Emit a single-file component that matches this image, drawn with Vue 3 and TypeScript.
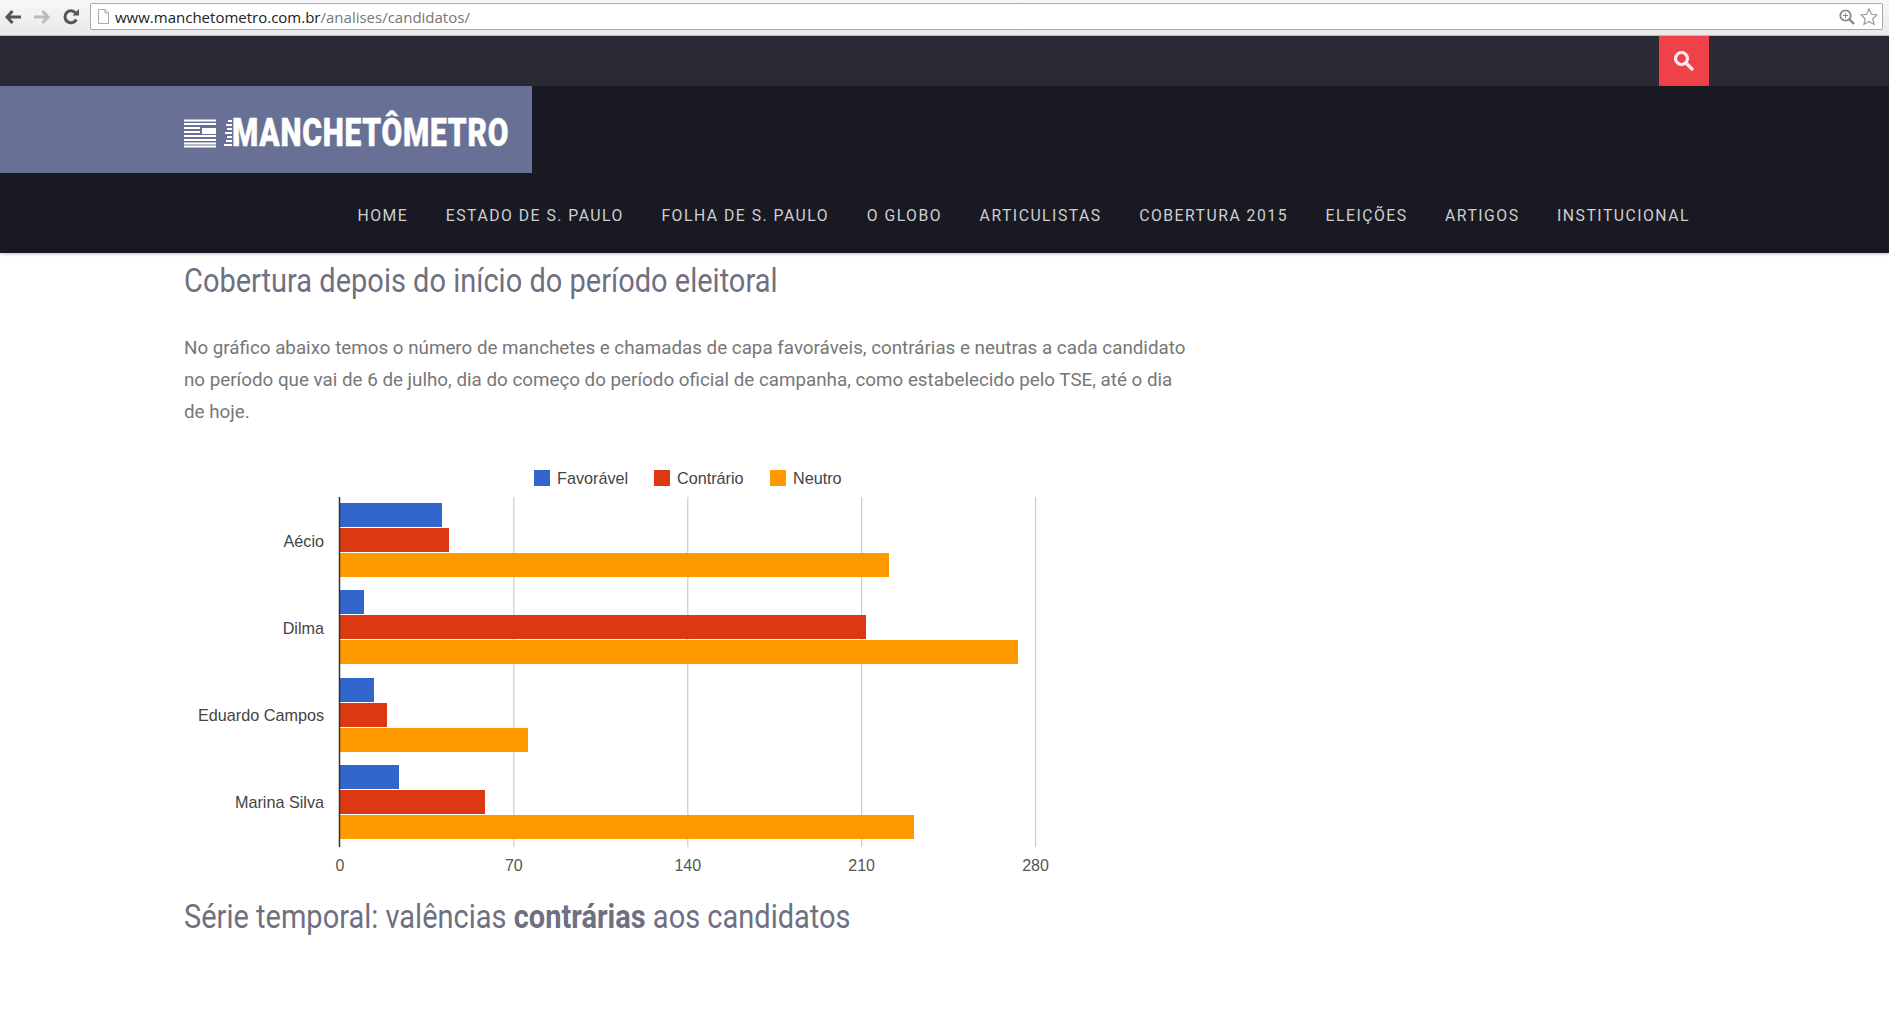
<template>
  <div class="page">
    <div class="browser">
      <svg class="nav-ico" width="16" height="14" viewBox="0 0 16 14"><path d="M7.500 1 2 7l5.500 6M2.500 7H16" fill="none" stroke="#555" stroke-width="3"/></svg>
      <svg class="nav-ico" width="16" height="14" viewBox="0 0 16 14"><path d="M8.500 1 14 7l-5.500 6M13.500 7H0" fill="none" stroke="#bbb" stroke-width="3"/></svg>
      <svg class="nav-ico" width="16" height="16" viewBox="0 0 16 16"><path d="M13.300 10.500A6 6 0 1 1 12.600 4" fill="none" stroke="#555" stroke-width="3"/><path d="M9.500 6.500H16V0z" fill="#555"/></svg>
      <div class="omnibox">
        <svg width="11" height="15" viewBox="0 0 11 15"><path d="M.5.500h6.500l3.500 3.500v10.500H.5zM7 .5V4h3.500" fill="#fff" stroke="#aaa"/></svg>
        <span class="url">www.manchetometro.com.br<span class="url-path">/analises/candidatos/</span></span>
        <span class="spacer"></span>
        <svg width="16" height="16" viewBox="0 0 16 16"><circle cx="6.500" cy="6.500" r="5.200" fill="none" stroke="#888" stroke-width="1.800"/><path d="M10.500 10.500 15 15" stroke="#888" stroke-width="2.400"/><path d="M4 6.500h5M6.500 4v5" stroke="#888"/></svg>
        <svg width="18" height="18" viewBox="0 0 18 18"><path d="m9 1 2.400 5.300 5.600.6-4.200 3.800 1.200 5.700L9 13.500l-5 2.900 1.200-5.700L1 6.900l5.600-.6z" fill="#fff" stroke="#999" stroke-width="1.200"/></svg>
      </div>
    </div>

    <div class="topbar">
      <button class="search" type="button">
        <svg class="search-ico" width="21" height="21" viewBox="0 0 21 21"><circle cx="8.500" cy="8.500" r="6" fill="none" stroke="#fbeeee" stroke-width="3.200"/><path d="m13 13 6 6" stroke="#fbeeee" stroke-width="3.400" stroke-linecap="round"/></svg>
      </button>
    </div>

    <header class="masthead">
      <div class="logo">
        <svg class="logo-mark" width="32" height="29" viewBox="0 0 32 29">
          <path d="M0 1.500h32M0 5h32M0 9h16M0 13h16M0 17h32M0 21h32M0 24.500h32M0 27.500h32" stroke="#fff" stroke-width="2"/>
          <rect x="18" y="9" width="14" height="6" fill="#fff"/>
        </svg>
        <svg class="logo-teeth" width="8" height="29" viewBox="0 0 8 29">
          <path d="M4 2h4M2 6h6M3 10h5M1 14h7M3 18h5M2 22h6M0 26h8" stroke="#fff" stroke-width="2.200"/>
        </svg>
        <span class="logo-text">MANCHETÔMETRO</span>
      </div>
      <nav class="menu">
        <a v-for="item in menu" :key="item">{{ item }}</a>
      </nav>
    </header>

    <main class="content">
      <h2 class="title">Cobertura depois do início do período eleitoral</h2>
      <p class="intro">
        No gráfico abaixo temos o número de manchetes e chamadas de capa favoráveis, contrárias e neutras a cada candidato
        no período que vai de 6 de julho, dia do começo do período oficial de campanha, como estabelecido pelo TSE, até o dia
        de hoje.
      </p>

      <svg class="chart" width="900" height="405" viewBox="0 0 900 405">
        <g v-for="s in series" :key="s.name">
          <rect :x="s.box" y="7" width="16" height="16" :fill="s.color" />
          <text :x="s.box + 23" y="20.500" class="legend">{{ s.name }}</text>
        </g>

        <line v-for="t in ticks.slice(1)" :key="t" :x1="xOf(t)" :x2="xOf(t)" y1="34" y2="384" stroke="#ccc" stroke-width="1.200" />

        <g v-for="(row, i) in rows" :key="row.name">
          <text x="140" :y="84 + i * 87" text-anchor="end" class="label">{{ row.name }}</text>
          <rect
            v-for="(w, j) in row.bars"
            :key="j"
            x="156"
            :y="rowTop(i) + j * 25"
            :width="w"
            height="24"
            :fill="series[j].color"
          />
        </g>

        <line x1="155.500" x2="155.500" y1="34" y2="384" stroke="#333" stroke-width="1.500" />

        <text v-for="t in ticks" :key="t" :x="xOf(t)" y="408" text-anchor="middle" class="tick">{{ t }}</text>
      </svg>

      <h2 class="title second">Série temporal: valências <strong>contrárias</strong> aos candidatos</h2>
    </main>
  </div>
</template>

<script setup lang="ts">
interface Row { name: string; bars: number[]; }

const menu = ['HOME', 'ESTADO DE S. PAULO', 'FOLHA DE S. PAULO', 'O GLOBO', 'ARTICULISTAS', 'COBERTURA 2015', 'ELEIÇÕES', 'ARTIGOS', 'INSTITUCIONAL'];

const series = [
  { name: 'Favorável', color: '#3366cc', box: 350 },
  { name: 'Contrário', color: '#dc3912', box: 470 },
  { name: 'Neutro', color: '#ff9900', box: 586 },
];

// bar lengths in px, read off the chart
const rows: Row[] = [
  { name: 'Aécio', bars: [102, 109, 549] },
  { name: 'Dilma', bars: [24, 526, 678] },
  { name: 'Eduardo Campos', bars: [34, 47, 188] },
  { name: 'Marina Silva', bars: [59, 145, 574] },
];

const ticks = [0, 70, 140, 210, 280];

const xOf = (v: number) => 156 + v * 2.484;
const rowTop = (i: number) => Math.round(40 + i * 87.3);
</script>

<style>
html, body { margin: 0; background: #fff; }
</style>

<style scoped>
.page { font-family: Roboto, "Open Sans", sans-serif; overflow: hidden; }

.browser { height: 36px; box-sizing: border-box; display: flex; align-items: center; padding: 0 6px 2px 5px; gap: 13px; background: linear-gradient(#f7f7f7, #e9e9e9); border-bottom: 1px solid #bbb; }
.nav-ico { flex: none; }
.omnibox { flex: 1; height: 27px; margin-left: -2px; box-sizing: border-box; display: flex; align-items: center; gap: 5px; padding: 0 4px 0 7px; background: #fff; border: 1px solid #aaa; border-radius: 2px; }
.url { font-family: "Open Sans", sans-serif; font-size: 15px; color: #222; margin-left: 1px; }
.url-path { color: #777; }
.spacer { flex: 1; }

.topbar { height: 50px; display: flex; justify-content: flex-end; padding-right: 180px; background: #2b2933; }
.search { width: 50px; height: 50px; border: 0; padding: 0 1px 2px 0; box-sizing: border-box; display: flex; align-items: center; justify-content: center; background: #ef4149; }

.masthead { background: #181922; box-shadow: 0 1px 3px rgba(0, 0, 0, .25); position: relative; }
.logo { width: 532px; height: 87px; box-sizing: border-box; padding-left: 184px; display: flex; align-items: center; background: #697096; }
.logo-mark { flex: none; margin-top: 8px; margin-right: 8px; }
.logo-teeth { flex: none; margin-top: 8px; }
.logo-text { font-size: 39px; line-height: 1; font-weight: 900; color: #fff; letter-spacing: 1px; -webkit-text-stroke: .5px #fff; transform: scaleX(.768); transform-origin: left center; margin-top: 8px; white-space: nowrap; }

.menu { height: 80px; box-sizing: border-box; display: flex; align-items: center; justify-content: flex-end; gap: 37.500px; padding: 5px 199px 0 0; }
.menu a { font-size: 15.750px; letter-spacing: 1.500px; color: #cfcfcf; white-space: nowrap; }

.content { padding: 0 0 0 184px; }
.title { margin: 0; font-size: 34px; line-height: 54px; font-weight: 400; color: #6f6f82; white-space: nowrap; transform: scaleX(.853); transform-origin: left center; }
.title strong { font-weight: 700; }
.intro { margin: 25px 0 0; width: 1010px; font-size: 18.800px; line-height: 32px; color: #777; }
.chart { display: block; margin: 35px 0 0 0; overflow: visible; }
.second { margin-top: 21px; }

.legend, .label { font-family: "Liberation Sans", Arial, sans-serif; font-size: 16.200px; fill: #444; }
.tick { font-family: "Liberation Sans", Arial, sans-serif; font-size: 16px; fill: #555; }
</style>
